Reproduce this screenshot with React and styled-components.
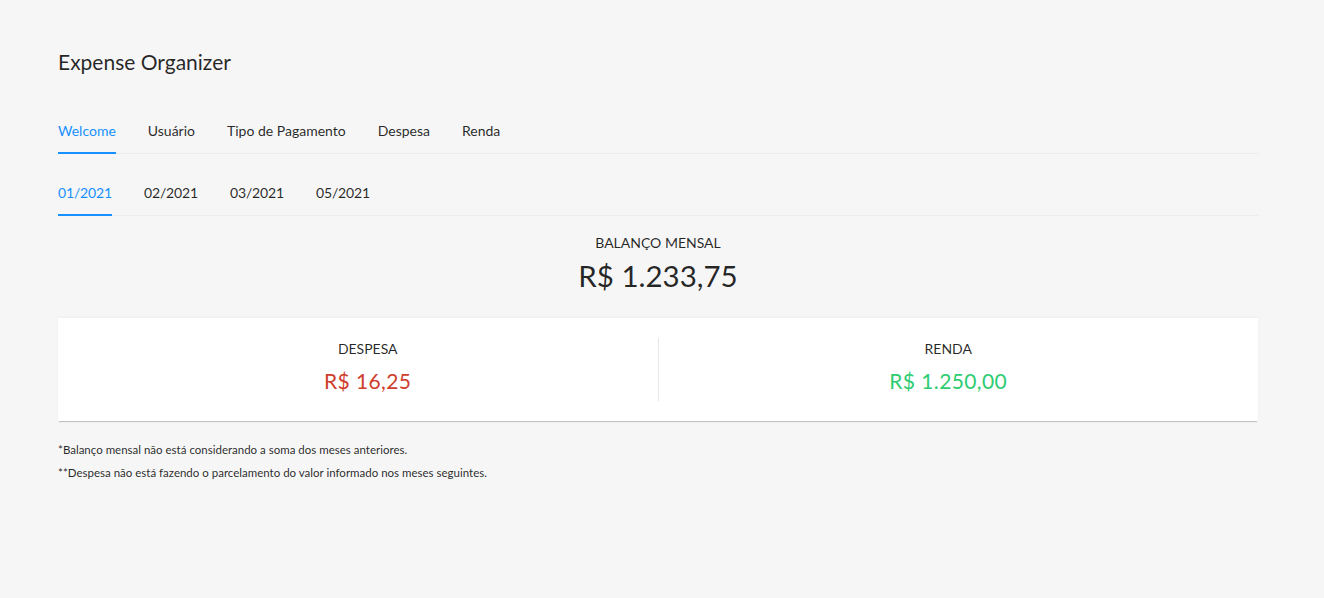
import React, { useState } from 'react';
import styled, { createGlobalStyle } from 'styled-components';

const GlobalStyle = createGlobalStyle`
  html, body {
    margin: 0;
    padding: 0;
    background: #f6f6f6;
    font-family: Lato, "Noto Sans", sans-serif;
    color: rgba(0, 0, 0, 0.85);
  }
`;

const mainTabs = ['Welcome', 'Usuário', 'Tipo de Pagamento', 'Despesa', 'Renda'];
const months = ['01/2021', '02/2021', '03/2021', '05/2021'];

export default function App() {
  const [tab, setTab] = useState(0);
  const [month, setMonth] = useState(0);

  return (
    <Page>
      <GlobalStyle />
      <Title>Expense Organizer</Title>

      <TabNav>
        {mainTabs.map((t, i) => (
          <Tab key={t} active={i === tab} onClick={() => setTab(i)}>
            {t}
          </Tab>
        ))}
      </TabNav>

      <TabNav>
        {months.map((m, i) => (
          <Tab key={m} tight active={i === month} onClick={() => setMonth(i)}>
            {m}
          </Tab>
        ))}
      </TabNav>

      <Balance>
        <StatTitle>BALANÇO MENSAL</StatTitle>
        <BigValue>R$ 1.233,75</BigValue>
      </Balance>

      <Card>
        <Stat side="left">
          <StatTitle gap={7}>DESPESA</StatTitle>
          <Value color="#cf3d2c">R$ 16,25</Value>
        </Stat>
        <Divider />
        <Stat side="right">
          <StatTitle gap={7}>RENDA</StatTitle>
          <Value color="#2ecc71">R$ 1.250,00</Value>
        </Stat>
      </Card>

      <Notes>
        <Note>*Balanço mensal não está considerando a soma dos meses anteriores.</Note>
        <Note>**Despesa não está fazendo o parcelamento do valor informado nos meses seguintes.</Note>
      </Notes>
    </Page>
  );
}

const Page = styled.div`
  width: 1200px;
  padding: 47px 58px;
`;

const Title = styled.h1`
  margin: 0 0 31px;
  font-size: 21px;
  font-weight: 400;
  line-height: 30px;
  color: rgba(0, 0, 0, 0.85);
`;

const TabNav = styled.div`
  display: flex;
  gap: 32px;
  border-bottom: 1px solid #ececec;
  margin-bottom: 16px;
`;

const Tab = styled.div`
  padding: 12px 0;
  font-size: 14px;
  line-height: 22px;
  letter-spacing: ${(p) => (p.tight ? '-0.15px' : 'normal')};
  cursor: pointer;
  color: ${(p) => (p.active ? '#1890ff' : 'rgba(0, 0, 0, 0.85)')};
  box-shadow: ${(p) => (p.active ? 'inset 0 -2px 0 #1890ff' : 'none')};
  margin-bottom: -1px;
`;

const Balance = styled.div`
  display: flex;
  flex-direction: column;
  align-items: center;
  margin-bottom: 24px;
`;

const StatTitle = styled.div`
  font-size: 14px;
  line-height: 22px;
  color: rgba(0, 0, 0, 0.85);
  margin-bottom: ${(p) => (p.gap ? p.gap : 4)}px;
`;

const BigValue = styled.div`
  font-size: 29.5px;
  line-height: 36px;
  color: rgba(0, 0, 0, 0.85);
`;

const Card = styled.div`
  display: flex;
  align-items: flex-start;
  background: #fff;
  padding: 20px 0;
  box-shadow: 0 2px 1px -1px rgba(0, 0, 0, 0.2), 0 -1px 2px rgba(0, 0, 0, 0.04);
`;

const Stat = styled.div`
  flex: 1;
  display: flex;
  flex-direction: column;
  align-items: center;
  padding-left: ${(p) => (p.side === 'left' ? '20px' : '0')};
  padding-right: ${(p) => (p.side === 'right' ? '20px' : '0')};
`;

const Divider = styled.div`
  width: 1px;
  height: 63px;
  background: #e6e6e6;
`;

const Value = styled.div`
  font-size: 21px;
  line-height: 28px;
  letter-spacing: 0.4px;
  color: ${(p) => p.color};
`;

const Notes = styled.div`
  margin-top: 20px;
`;

const Note = styled.p`
  margin: 0 0 5px;
  font-size: 11.5px;
  line-height: 18px;
  color: rgba(0, 0, 0, 0.85);
`;
